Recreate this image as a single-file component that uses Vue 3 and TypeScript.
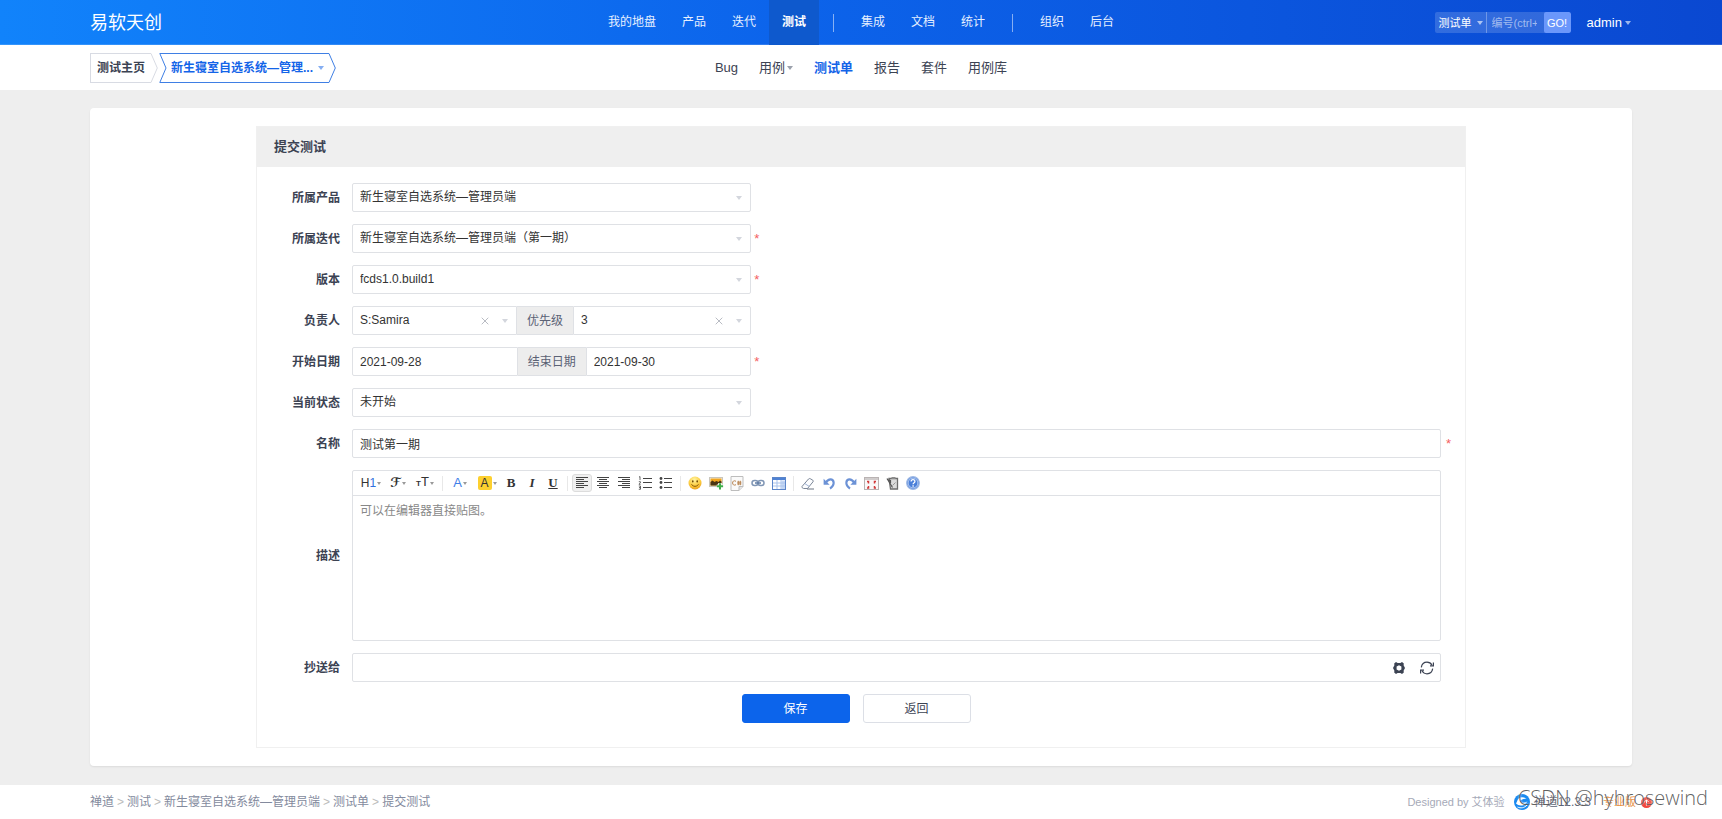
<script setup lang="ts">
import { ref } from 'vue'

interface NavItem {
  text: string
  active?: boolean
  divider?: boolean
  caret?: boolean
}

const mainNav: NavItem[] = [
  { text: '我的地盘' },
  { text: '产品' },
  { text: '迭代' },
  { text: '测试', active: true },
  { text: '', divider: true },
  { text: '集成' },
  { text: '文档' },
  { text: '统计' },
  { text: '', divider: true },
  { text: '组织' },
  { text: '后台' },
]

const subNav: NavItem[] = [
  { text: 'Bug' },
  { text: '用例', caret: true },
  { text: '测试单', active: true },
  { text: '报告' },
  { text: '套件' },
  { text: '用例库' },
]

const crumbs: string[] = ['禅道', '测试', '新生寝室自选系统—管理员端', '测试单', '提交测试']

const product = ref('新生寝室自选系统—管理员端')
const project = ref('新生寝室自选系统—管理员端（第一期）')
const build = ref('fcds1.0.build1')
const owner = ref('S:Samira')
const priority = ref('3')
const begin = ref('2021-09-28')
const end = ref('2021-09-30')
const status = ref('未开始')
const name = ref('测试第一期')
const description = ref('')
const mailto = ref('')
const searchId = ref('')
</script>

<template>
  <div class="page">
    <header class="header">
      <a class="logo" href="#">易软天创</a>
      <nav class="main-nav">
        <template v-for="(item, i) in mainNav" :key="i">
          <span v-if="item.divider" class="nav-divider"></span>
          <a v-else href="#" class="nav-link" :class="{ active: item.active }">{{ item.text }}</a>
        </template>
      </nav>
      <div class="tools">
        <form class="search" @submit.prevent>
          <button type="button" class="search-type">测试单<i class="caret"></i></button>
          <input v-model="searchId" class="search-input" type="text" placeholder="编号(ctrl+g)" aria-label="编号" />
          <button type="submit" class="go">GO!</button>
        </form>
        <button type="button" class="user">admin<i class="caret"></i></button>
      </div>
    </header>

    <div class="subheader">
      <div class="tabs">
        <a href="#" class="tab">
          <span class="tab-body first">测试主页</span>
          <svg class="tab-end" width="8" height="30" viewBox="0 0 8 30"><path d="M0 .5H1L7.3 15 1 29.5H0" /></svg>
        </a>
        <a href="#" class="tab current">
          <svg class="tab-end" width="8" height="30" viewBox="0 0 8 30"><path d="M8 .5H.8L7 15 .8 29.5H8" /></svg>
          <span class="tab-body">新生寝室自选系统—管理...<i class="caret"></i></span>
          <svg class="tab-end" width="8" height="30" viewBox="0 0 8 30"><path d="M0 .5H1L7.3 15 1 29.5H0" /></svg>
        </a>
      </div>
      <nav class="sub-nav">
        <a v-for="item in subNav" :key="item.text" href="#" :class="{ active: item.active }">{{ item.text }}<i v-if="item.caret" class="caret"></i></a>
      </nav>
    </div>

    <main class="content">
      <section class="card">
        <div class="panel">
          <h2 class="panel-title">提交测试</h2>
          <form class="form" @submit.prevent>
            <div class="row">
              <label for="product">所属产品</label>
              <div class="half">
                <div class="picker">
                  <select id="product" v-model="product"><option>新生寝室自选系统—管理员端</option></select>
                  <i class="caret"></i>
                </div>
              </div>
            </div>
            <div class="row">
              <label for="project">所属迭代</label>
              <div class="half">
                <div class="picker">
                  <select id="project" v-model="project"><option>新生寝室自选系统—管理员端（第一期）</option></select>
                  <i class="caret"></i>
                </div>
                <span class="required">*</span>
              </div>
            </div>
            <div class="row">
              <label for="build">版本</label>
              <div class="half">
                <div class="picker">
                  <select id="build" v-model="build"><option>fcds1.0.build1</option></select>
                  <i class="caret"></i>
                </div>
                <span class="required">*</span>
              </div>
            </div>
            <div class="row">
              <label for="owner">负责人</label>
              <div class="half">
                <div class="group">
                  <div class="picker owner">
                    <select id="owner" v-model="owner"><option>S:Samira</option></select>
                    <button type="button" class="clear" aria-label="清除负责人">
                      <svg width="8" height="8" viewBox="0 0 8 8"><path d="M.7.7l6.6 6.6M7.3.7L.7 7.3" /></svg>
                    </button>
                    <i class="caret"></i>
                  </div>
                  <label class="addon" for="pri">优先级</label>
                  <div class="picker">
                    <select id="pri" v-model="priority"><option>3</option></select>
                    <button type="button" class="clear" aria-label="清除优先级">
                      <svg width="8" height="8" viewBox="0 0 8 8"><path d="M.7.7l6.6 6.6M7.3.7L.7 7.3" /></svg>
                    </button>
                    <i class="caret"></i>
                  </div>
                </div>
              </div>
            </div>
            <div class="row">
              <label for="begin">开始日期</label>
              <div class="half">
                <div class="group">
                  <input id="begin" v-model="begin" class="control" type="text" />
                  <label class="addon" for="end">结束日期</label>
                  <input id="end" v-model="end" class="control" type="text" />
                </div>
                <span class="required">*</span>
              </div>
            </div>
            <div class="row">
              <label for="status">当前状态</label>
              <div class="half">
                <div class="picker">
                  <select id="status" v-model="status"><option>未开始</option></select>
                  <i class="caret"></i>
                </div>
              </div>
            </div>
            <div class="row">
              <label for="name">名称</label>
              <input id="name" v-model="name" class="control" type="text" />
              <span class="required wide">*</span>
            </div>
            <div class="row">
              <label for="desc">描述</label>
              <div class="editor">
                <div class="toolbar">
                  <button type="button" class="tb menu" aria-label="标题"><span class="t-head">H<b>1</b></span><i class="caret"></i></button>
                  <button type="button" class="tb menu" aria-label="字体"><span class="t-font">ℱ</span><i class="caret"></i></button>
                  <button type="button" class="tb menu" aria-label="字号"><span class="t-size"><small>T</small>T</span><i class="caret"></i></button>
                  <span class="tb-sep"></span>
                  <button type="button" class="tb menu" aria-label="文字颜色"><span class="t-color">A</span><i class="caret"></i></button>
                  <button type="button" class="tb menu" aria-label="背景颜色"><span class="t-back">A</span><i class="caret"></i></button>
                  <button type="button" class="tb serif" aria-label="粗体">B</button>
                  <button type="button" class="tb serif italic" aria-label="斜体">I</button>
                  <button type="button" class="tb serif under" aria-label="下划线">U</button>
                  <span class="tb-sep"></span>
                  <button type="button" class="tb on" aria-label="左对齐">
                    <svg width="14" height="12" viewBox="0 0.5 14 12" class="lines"><path d="M1 1h12M1 3h8M1 5h12M1 7h8M1 9h12M1 11h8" /></svg>
                  </button>
                  <button type="button" class="tb" aria-label="居中">
                    <svg width="14" height="12" viewBox="0 0.5 14 12" class="lines"><path d="M1 1h12M3 3h8M1 5h12M3 7h8M1 9h12M3 11h8" /></svg>
                  </button>
                  <button type="button" class="tb" aria-label="右对齐">
                    <svg width="14" height="12" viewBox="0 0.5 14 12" class="lines"><path d="M1 1h12M5 3h8M1 5h12M5 7h8M1 9h12M5 11h8" /></svg>
                  </button>
                  <button type="button" class="tb" aria-label="编号">
                    <svg width="14" height="14" viewBox="0 0 14 14" class="lines">
                      <path d="M5 2.5h9M5 6.5h9M5 11.5h9" /><path class="thin" d="M1 1.2l1-.7v3.6M.8 5.7h1.6v1.2L.9 8.3h1.7M.8 10h1.7v1.6H1.3h1.2v1.7H.8" />
                    </svg>
                  </button>
                  <button type="button" class="tb" aria-label="列表">
                    <svg width="14" height="14" viewBox="0 0 14 14" class="lines">
                      <path d="M5 2.5h8M5 6.5h8M5 11.5h8" /><g stroke="none"><circle cx="2" cy="2.5" r="1.4" /><circle cx="2" cy="6.5" r="1.4" /><circle cx="2" cy="11.5" r="1.4" /></g>
                    </svg>
                  </button>
                  <span class="tb-sep"></span>
                  <button type="button" class="tb" aria-label="表情">
                    <svg width="14" height="14" viewBox="0 0 14 14">
                      <defs><radialGradient id="smile" cx=".45" cy=".25" r=".8"><stop offset="0" stop-color="#fff3a0" /><stop offset=".6" stop-color="#fccb3c" /><stop offset="1" stop-color="#e89a1c" /></radialGradient></defs>
                      <circle cx="7" cy="7" r="6.5" fill="url(#smile)" />
                      <ellipse cx="4.8" cy="5.4" rx=".8" ry="1.1" fill="#6b4300" /><ellipse cx="9.2" cy="5.4" rx=".8" ry="1.1" fill="#6b4300" />
                      <path d="M3.4 8.4q3.6 4 7.2 0" fill="none" stroke="#8a5a0a" />
                    </svg>
                  </button>
                  <button type="button" class="tb" aria-label="图片">
                    <svg width="15" height="14" viewBox="0 0 15 14">
                      <rect x=".5" y="1.5" width="13" height="9" fill="#f1efe8" stroke="#c9c6bd" /><rect x="1.5" y="2.5" width="11" height="7" fill="#f2a51d" />
                      <path d="M1.5 9.5V6l2-1.5 2 1.5 2-1 2 1 1.5-1.5 1.5 1V9.5z" fill="#4b3513" />
                      <path d="M11 7v6.5M7.8 10.3h6.5" stroke="#fff" stroke-width="3.6" /><path d="M11 7.2v6.2M7.9 10.3h6.2" stroke="#3fae49" stroke-width="2" />
                    </svg>
                  </button>
                  <button type="button" class="tb" aria-label="插入代码">
                    <svg width="14" height="15" viewBox="0 0 14 15">
                      <path d="M1 .5h12v10l-4 4H1z" fill="#fafafa" stroke="#bdbdbd" /><path d="M13 10.5H9v4" fill="#e4e4e4" stroke="#bdbdbd" />
                      <path d="M6 5.3C3.8 4 2.6 5.3 2.6 7s1.4 2.8 3.4 1.7M8.3 4.8v4.4M10.3 4.8v4.4M7.2 6.2h4.2M7.2 7.9h4.2" fill="none" stroke="#b98552" />
                    </svg>
                  </button>
                  <button type="button" class="tb" aria-label="超级链接">
                    <svg width="14" height="8" viewBox="0 0 14 8" fill="none" stroke-width="1.5">
                      <rect x="1" y="1.5" width="6" height="5" rx="2.5" stroke="#8096b5" /><rect x="7" y="1.5" width="6" height="5" rx="2.5" stroke="#8096b5" /><path d="M4 4h6" stroke="#5f7ba3" />
                    </svg>
                  </button>
                  <button type="button" class="tb" aria-label="表格">
                    <svg width="14" height="13" viewBox="0 0 14 13">
                      <rect x=".5" y=".5" width="13" height="12" fill="#fff" stroke="#5c86c9" /><path d="M1 2h12" stroke="#4f82d4" stroke-width="2" />
                      <rect x="9.5" y="3.5" width="3.5" height="8.5" fill="#c3d6f4" />
                      <path d="M1 6h12M1 9h12M5 3v9M9 3v9" stroke="#a9c3ec" />
                    </svg>
                  </button>
                  <span class="tb-sep"></span>
                  <button type="button" class="tb" aria-label="删除格式">
                    <svg width="14" height="13" viewBox="0 0 14 13">
                      <path d="M1 9.5L7.5 2q.8-.8 1.7-.3l2.6 1.5q.9.7.2 1.6L6.5 11.5H2.7Q.5 11 1 9.5z" fill="#fcfdff" stroke="#7c8798" /><path d="M3.7 6.5l4.6 3" stroke="#9fb3d6" /><path d="M6 12h7" stroke="#6b7483" />
                    </svg>
                  </button>
                  <button type="button" class="tb" aria-label="后退">
                    <svg width="13" height="13" viewBox="0 0 13 13"><path d="M3 5.500C5.500 1.500 10 1.500 10.600 5.200c.3 2.400-1 4.700-3.600 6.300" fill="none" stroke="#6c92d6" stroke-width="2.200" /><path d="M.6 1.800v6h6z" fill="#6c92d6" /></svg>
                  </button>
                  <button type="button" class="tb" aria-label="前进">
                    <svg width="13" height="13" viewBox="0 0 13 13"><path d="M10 5.500C7.500 1.500 3 1.500 2.400 5.200c-.3 2.400 1 4.700 3.600 6.300" fill="none" stroke="#6c92d6" stroke-width="2.200" /><path d="M12.400 1.800v6h-6z" fill="#6c92d6" /></svg>
                  </button>
                  <button type="button" class="tb" aria-label="全屏显示">
                    <svg width="15" height="13" viewBox="0 0 15 13">
                      <rect x=".5" y=".5" width="14" height="12" fill="#faf8f8" stroke="#b9b3b3" /><path d="M1 2h13" stroke="#d0cccc" stroke-width="2" />
                      <path d="M3 4.500h1.500v2M12 4.500h-1.500v2M3 11h1.500V9M12 11h-1.500V9" fill="none" stroke="#d23c3c" stroke-width="1.500" />
                    </svg>
                  </button>
                  <button type="button" class="tb" aria-label="粘贴">
                    <svg width="13" height="14" viewBox="0 0 13 14">
                      <path d="M3 2.500h8.500v10.500H4.500z" fill="#dcdcdc" stroke="#6d6d6d" stroke-width="1.300" /><path d="M5.500 1h4v2h-4z" fill="#8d8d8d" /><path d="M1 2.500l5.500 9M4.500 7V4.500L1 3.500" fill="none" stroke="#555" stroke-width="1.200" /><path d="M6.500 9.500l3-3" stroke="#999" />
                    </svg>
                  </button>
                  <button type="button" class="tb" aria-label="帮助">
                    <svg width="14" height="14" viewBox="0 0 14 14">
                      <circle cx="7" cy="7" r="6.300" fill="#4a7fd9" stroke="#9db8e4" stroke-width="1.200" /><circle cx="7" cy="7" r="4.900" fill="none" stroke="#dfe9fa" stroke-width=".7" />
                      <path d="M5.100 5.600c0-2.600 3.800-2.500 3.800-.2C8.900 6.800 7.100 6.700 7.100 8.300M7.100 9.300v1.400" fill="none" stroke="#fff" stroke-width="1.300" />
                    </svg>
                  </button>
                </div>
                <textarea id="desc" v-model="description" placeholder="可以在编辑器直接贴图。"></textarea>
              </div>
            </div>
            <div class="row">
              <label for="mailto">抄送给</label>
              <div class="mailto">
                <input id="mailto" v-model="mailto" type="text" />
                <button type="button" aria-label="设置">
                  <svg width="12" height="12" viewBox="0 0 12 12"><path fill-rule="evenodd" fill="#3c4353" d="M3 0l1.600 1h2.800L9 0l1.800 1.400-.2 1.900L12 6l-1.400 2.700.2 1.900L9 12l-1.600-1H4.600L3 12l-1.800-1.400.2-1.900L0 6l1.400-2.700-.2-1.900zM6 3.200L3.600 4.500v3L6 8.800l2.400-1.300v-3z" /></svg>
                </button>
                <button type="button" aria-label="刷新">
                  <svg width="14" height="14" viewBox="0 0 14 14" fill="none" stroke="#3c4353" stroke-width="1.200"><path d="M1.300 6.300C1.800 3.200 4.200 1.200 7 1.200c2.300 0 4 1.200 5 3M12.700 7.700c-.5 3.100-2.900 5.100-5.700 5.100-2.300 0-4-1.200-5-3" /><path d="M13.400 1.500v3.300H10M.6 12.500V9.200H4" /></svg>
                </button>
              </div>
            </div>
            <div class="actions">
              <button type="submit" class="btn primary">保存</button>
              <button type="button" class="btn">返回</button>
            </div>
          </form>
        </div>
      </section>
    </main>

    <footer class="footer">
      <nav class="crumbs">
        <template v-for="(crumb, i) in crumbs" :key="crumb">
          <span v-if="i > 0" class="gt">&gt;</span>
          <a href="#">{{ crumb }}</a>
        </template>
      </nav>
      <div class="powered">
        <span class="designed">Designed by 艾体验</span>
        <svg width="16" height="16" viewBox="0 0 16 16"><circle cx="8" cy="8" r="8" fill="#1a8af0" /><path d="M2 9.500c3 3.200 9 2.700 11.500-2.500-2 2-5.500 2.400-7.500.5 1-2 4-3 6.500-2.500C9 2 4 3 3 7.500" fill="#fff" /><path d="M3.500 13c3 1.500 7 1 9.500-2" fill="none" stroke="#fff" /></svg>
        <a href="#" class="version">禅道12.3.3</a>
        <a href="#" class="pro">专业版</a>
        <svg width="11" height="11" viewBox="0 0 11 11"><circle cx="5.500" cy="5.500" r="5.500" fill="#f2453d" /><path d="M5.500 8.500V3M3.200 5.200l2.300-2.300 2.300 2.300" fill="none" stroke="#fff" /></svg>
      </div>
      <span class="watermark">CSDN @hyhrosewind</span>
    </footer>
  </div>
</template>

<style>
body {
  background: #eee;
}
</style>

<style scoped>
.page {
  display: flex;
  flex-direction: column;
  min-height: 100vh;
  color: #3c4353;
  font-family: "Liberation Sans", "Noto Sans CJK SC", sans-serif;
  font-size: 12px;
  line-height: 18px;
}
.page *,
.page *::before {
  box-sizing: border-box;
}
a {
  color: inherit;
  text-decoration: none;
}
button,
input,
select,
textarea {
  margin: 0;
  padding: 0;
  border: 0;
  border-radius: 0;
  outline: 0;
  background: none;
  color: inherit;
  font: inherit;
}
.caret {
  display: inline-block;
  flex: none;
  width: 0;
  height: 0;
  border: 3px solid transparent;
  border-top: 4px solid currentColor;
  border-bottom: 0;
}

/* top bars */
.header,
.subheader {
  display: grid;
  grid-template-columns: 1fr auto 1fr;
  align-items: center;
  height: 45px;
  padding: 0 90px;
}
.header {
  background: linear-gradient(90deg, #1183fb, #0c64eb 45%, #0a48d1);
  box-shadow: inset 0 -1px rgba(255, 255, 255, 0.15);
  color: #fff;
}
.logo {
  font-size: 18px;
}
.main-nav {
  display: flex;
  align-items: center;
}
.nav-link {
  height: 45px;
  padding: 0 13px;
  color: #e6f0ff;
  line-height: 44px;
}
.nav-link.active {
  background: #0e59cd;
  color: #fff;
  font-weight: 700;
}
.nav-divider {
  width: 1px;
  height: 18px;
  margin: 0 14px;
  background: rgba(255, 255, 255, 0.5);
}
.tools {
  display: flex;
  align-items: center;
  justify-content: flex-end;
  gap: 16px;
}
.search {
  display: flex;
  height: 21px;
  overflow: hidden;
  border-radius: 2px;
  background: rgba(255, 255, 255, 0.16);
  font-size: 11px;
}
.search-type {
  display: flex;
  align-items: center;
  gap: 5px;
  width: 52px;
  padding-left: 4px;
  border-right: 1px solid rgba(255, 255, 255, 0.3);
}
.search-type .caret,
.user .caret {
  color: rgba(255, 255, 255, 0.6);
}
.search-input {
  width: 57px;
  padding: 0 7px 0 5px;
}
.search-input::placeholder {
  color: rgba(255, 255, 255, 0.55);
}
.go {
  width: 27px;
  border-radius: 2px;
  background: #6b97fb;
}
.user {
  display: flex;
  align-items: center;
  gap: 3px;
  padding-right: 1px;
  font-size: 13px;
}
.subheader {
  background: #fff;
}
.tabs {
  display: flex;
  gap: 1px;
}
.tab {
  display: flex;
  height: 30px;
  color: #3c4353;
  font-weight: 700;
  white-space: nowrap;
}
.tab-body {
  display: flex;
  align-items: center;
  gap: 5px;
  padding: 0 4px;
  border: solid #d8dbe3;
  border-width: 1px 0;
}
.tab-body.first {
  padding: 0 5px 0 6px;
  border-left-width: 1px;
}
.tab-end {
  flex: none;
  fill: none;
  stroke: #d8dbe3;
}
.current {
  color: #1364e8;
}
.current .tab-body {
  border-color: #3f7fe4;
}
.current .tab-end {
  stroke: #3f7fe4;
}
.current .caret {
  color: #85aef2;
}
.sub-nav {
  display: flex;
  gap: 21px;
  font-size: 13px;
}
.sub-nav a {
  display: flex;
  align-items: center;
  gap: 2px;
}
.sub-nav .active {
  color: #1364e8;
  font-weight: 700;
}
.sub-nav .caret {
  color: #9ba1ac;
}

/* form card */
.content {
  flex: 1;
  padding: 18px 90px 19px;
}
.card {
  padding: 18px;
  border-radius: 4px;
  background: #fff;
  box-shadow: 0 1px 2px rgba(0, 0, 0, 0.08);
}
.panel {
  max-width: 1210px;
  margin: 0 auto;
  border: 1px solid #f0f0f0;
}
.panel-title {
  height: 40px;
  margin: 0;
  padding-left: 17px;
  background: #efefef;
  font-size: 13px;
  line-height: 40px;
}
.form {
  display: flex;
  flex-direction: column;
  gap: 12px;
  padding: 16px 0 24px;
}
.row {
  display: grid;
  grid-template-columns: 95px 1fr 24px;
  align-items: center;
}
.row > label {
  padding-right: 12px;
  font-weight: 700;
  text-align: right;
}
.half {
  display: grid;
  grid-template-columns: 11fr 19fr;
  align-items: center;
}
.required {
  padding-left: 3px;
  color: #f4605f;
  font-size: 13px;
}
.required.wide {
  padding-left: 5px;
}
.picker,
.control,
.group,
.mailto {
  height: 29px;
}
.picker,
.control {
  width: 100%;
  border: 1px solid #dfe1e5;
  border-radius: 2px;
  background: #fff;
  color: #333;
}
.control {
  padding: 0 7px;
}
.picker {
  position: relative;
}
.picker select {
  display: block;
  width: 100%;
  height: 26px;
  padding: 0 38px 0 7px;
  appearance: none;
}
.picker .caret {
  position: absolute;
  top: 12px;
  right: 8px;
  color: #d3d6dd;
  pointer-events: none;
}
.clear {
  position: absolute;
  top: 6px;
  right: 24px;
  display: flex;
  align-items: center;
  justify-content: center;
  width: 14px;
  height: 16px;
}
.clear svg {
  fill: none;
  stroke: #b9bcc3;
}
.group {
  display: flex;
}
.group > :first-child {
  border-top-right-radius: 0;
  border-bottom-right-radius: 0;
}
.group > :last-child {
  border-top-left-radius: 0;
  border-bottom-left-radius: 0;
}
.group .picker,
.group .control {
  flex: 1;
  min-width: 0;
}
.group .owner {
  flex: 0 1 165px;
}
.addon {
  padding: 0 10px;
  border: solid #dfe1e5;
  border-width: 1px 0;
  background: #ededed;
  color: #5b6275;
  line-height: 28px;
  white-space: nowrap;
}

/* rich text editor */
.editor {
  border: 1px solid #dfe1e5;
  border-radius: 2px;
}
.toolbar {
  display: flex;
  align-items: center;
  height: 25px;
  padding-left: 5px;
  border-bottom: 1px solid #dfe1e5;
}
.tb {
  display: flex;
  flex: none;
  align-items: center;
  justify-content: center;
  width: 20px;
  height: 18px;
  margin-right: 1px;
  color: #333;
}
.tb.menu {
  gap: 1px;
  width: 26px;
}
.tb .caret {
  border-width: 3px 2px 0;
  color: #999;
}
.tb.on {
  border: 1px solid #dcdcdc;
  border-radius: 3px;
  background: #f0f0f0;
}
.tb-sep {
  flex: none;
  width: 1px;
  height: 15px;
  margin: 0 4px 0 3px;
  background: #e8e8e8;
}
.t-head b {
  color: #2f6fe0;
  font-weight: 400;
}
.t-font {
  font-family: "DejaVu Sans", sans-serif;
  font-size: 13px;
  font-weight: 700;
}
.t-size {
  font-size: 13px;
}
.t-size small {
  font-size: 8px;
  font-weight: 700;
}
.t-color {
  color: #3f7ee8;
  font-size: 13px;
}
.t-back {
  width: 14px;
  height: 14px;
  border-radius: 2px;
  background: #fdd02f;
  line-height: 14px;
}
.serif {
  font-family: "Liberation Serif", serif;
  font-size: 13px;
  font-weight: 700;
}
.italic {
  font-style: italic;
}
.under {
  text-decoration: underline;
}
.lines {
  fill: #444;
  stroke: #444;
}
.lines .thin {
  fill: none;
  stroke-width: 0.8;
}
.editor textarea {
  display: block;
  width: 100%;
  height: 144px;
  padding: 6px 7px;
  resize: none;
}
textarea::placeholder {
  color: #888;
}
.mailto {
  display: flex;
  align-items: center;
  padding-right: 5px;
  border: 1px solid #dfe1e5;
  border-radius: 2px;
}
.mailto input {
  flex: 1;
  height: 27px;
  padding: 0 7px;
}
.mailto button {
  display: flex;
  align-items: center;
  justify-content: center;
  width: 16px;
  height: 16px;
}
.mailto button + button {
  margin-left: 12px;
}
.actions {
  display: flex;
  justify-content: center;
  gap: 13px;
  padding-right: 10px;
}
.btn {
  width: 108px;
  height: 29px;
  border: 1px solid #dcdfe6;
  border-radius: 3px;
  background: #fff;
}
.btn.primary {
  border-color: #0c64eb;
  background: #0c64eb;
  color: #fff;
}

/* footer */
.footer {
  position: relative;
  display: flex;
  align-items: center;
  justify-content: space-between;
  height: 34px;
  padding: 0 90px;
  background: #fff;
  color: #838a9d;
}
.crumbs {
  display: flex;
  gap: 3px;
}
.gt {
  color: #bbb;
}
.powered {
  display: flex;
  align-items: center;
  margin-right: -20px;
  font-size: 11px;
}
.designed {
  margin-right: 9px;
  color: #a6aab8;
}
.version {
  margin: 0 12px 0 4px;
  color: #5b6275;
  font-size: 12px;
}
.pro {
  margin-right: 5px;
  color: #e8903f;
}
.watermark {
  position: absolute;
  right: 14px;
  bottom: 7px;
  color: rgba(70, 70, 70, 0.85);
  font-family: "Open Sans", "Noto Sans", sans-serif;
  font-size: 20px;
  font-weight: 300;
  line-height: 28px;
  text-shadow: 0 0 2px #fff;
}
</style>
